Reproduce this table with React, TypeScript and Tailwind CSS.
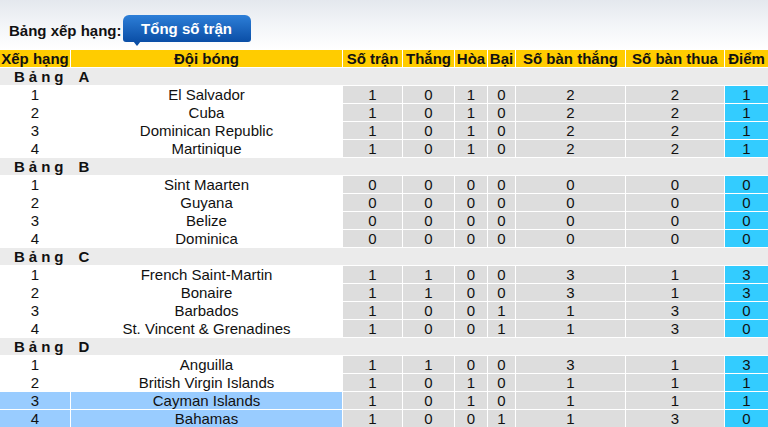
import React from "react";

const cols = "grid grid-cols-[70px_271px_59px_51px_32px_27px_109px_98px_43px] gap-x-px";

type Row = [string, number, number, number, number, number, number, number];

const groups: { name: string; rows: Row[] }[] = [
  {
    name: "A",
    rows: [
      ["El Salvador", 1, 0, 1, 0, 2, 2, 1],
      ["Cuba", 1, 0, 1, 0, 2, 2, 1],
      ["Dominican Republic", 1, 0, 1, 0, 2, 2, 1],
      ["Martinique", 1, 0, 1, 0, 2, 2, 1],
    ],
  },
  {
    name: "B",
    rows: [
      ["Sint Maarten", 0, 0, 0, 0, 0, 0, 0],
      ["Guyana", 0, 0, 0, 0, 0, 0, 0],
      ["Belize", 0, 0, 0, 0, 0, 0, 0],
      ["Dominica", 0, 0, 0, 0, 0, 0, 0],
    ],
  },
  {
    name: "C",
    rows: [
      ["French Saint-Martin", 1, 1, 0, 0, 3, 1, 3],
      ["Bonaire", 1, 1, 0, 0, 3, 1, 3],
      ["Barbados", 1, 0, 0, 1, 1, 3, 0],
      ["St. Vincent & Grenadines", 1, 0, 0, 1, 1, 3, 0],
    ],
  },
  {
    name: "D",
    rows: [
      ["Anguilla", 1, 1, 0, 0, 3, 1, 3],
      ["British Virgin Islands", 1, 0, 1, 0, 1, 1, 1],
      ["Cayman Islands", 1, 0, 1, 0, 1, 1, 1],
      ["Bahamas", 1, 0, 0, 1, 1, 3, 0],
    ],
  },
];

const headers = ["Xếp hạng", "Đội bóng", "Số trận", "Thắng", "Hòa", "Bại", "Số bàn thắng", "Số bàn thua", "Điểm"];

export default function App() {
  return (
    <div
      className="w-[768px] h-[427px] overflow-hidden bg-white text-[15px] text-[#111]"
      style={{ fontFamily: '"Liberation Sans", Arial, sans-serif' }}
    >
      <div className="h-[50px] bg-gradient-to-b from-[#e4e8ee] via-[#f3f5f8] to-white flex items-start pt-[15px] pl-[9px]">
        <span className="font-bold text-[15px] leading-[17px] mt-[7px]">Bảng xếp hạng:</span>
        <div className="relative ml-[1px]">
          <div className="w-[128px] h-[27px] rounded-t-[6px] rounded-b-[3px] bg-gradient-to-b from-[#2d7fd8] to-[#0a4ea6] flex items-center justify-center text-white font-bold text-[15px] leading-[17px]">
            Tổng số trận
          </div>
          <div className="absolute left-[10px] top-[26px] w-0 h-0 border-l-[4px] border-r-[4px] border-t-[5px] border-l-transparent border-r-transparent border-t-[#0a4ea6]" />
        </div>
      </div>
      <div className="flex flex-col gap-y-px">
        <div className={`${cols} h-[17px]`}>
          {headers.map((h) => (
            <div key={h} className="bg-[#ffcc00] font-bold text-center leading-[17px] whitespace-nowrap">
              {h}
            </div>
          ))}
        </div>
        {groups.map((g) => (
          <React.Fragment key={g.name}>
            <div className="h-[17px] bg-[#ebebeb] font-bold leading-[17px] pl-[14px]">
              <span className="tracking-[4px]">Bảng</span>
              <span className="ml-[11px]">{g.name}</span>
            </div>
            {g.rows.map((r, i) => {
              const hl = r[0] === "Cayman Islands" || r[0] === "Bahamas";
              const left = hl ? "bg-[#99ccff]" : "bg-white";
              return (
                <div key={r[0]} className={`${cols} h-[17px] leading-[17px] text-center`}>
                  <div className={left}>{i + 1}</div>
                  <div className={left}>{r[0]}</div>
                  {r.slice(1, 7).map((v, j) => (
                    <div key={j} className="bg-[#dddddd]">
                      {v}
                    </div>
                  ))}
                  <div className="bg-[#33ccff]">{r[7]}</div>
                </div>
              );
            })}
          </React.Fragment>
        ))}
      </div>
    </div>
  );
}
